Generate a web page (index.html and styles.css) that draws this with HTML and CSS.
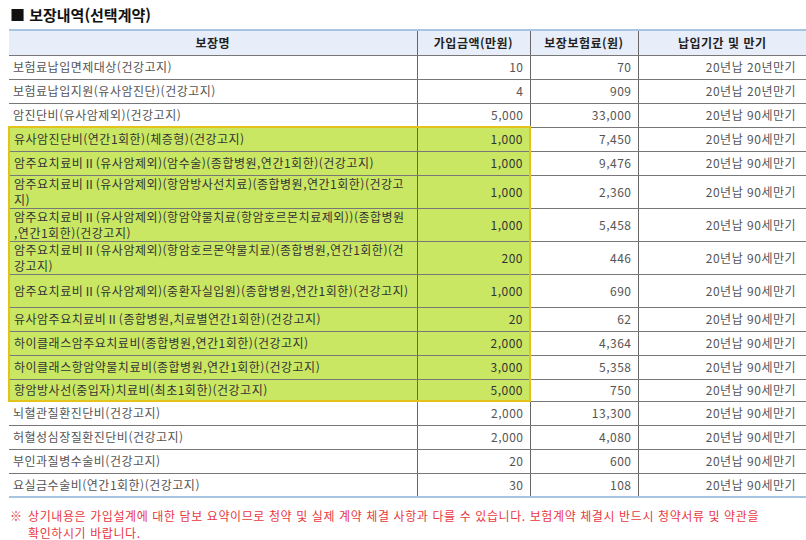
FILE: index.html
```html
<!DOCTYPE html>
<html lang="ko">
<head>
<meta charset="utf-8">
<link rel="stylesheet" href="styles.css">
</head>
<body>
<div class="page">
  <h2 class="title">■ 보장내역(선택계약)</h2>
  <table class="cov">
    <colgroup>
      <col class="c1"><col class="c2"><col class="c3"><col class="c4">
    </colgroup>
    <thead>
      <tr><th>보장명</th><th>가입금액(만원)</th><th>보장보험료(원)</th><th>납입기간 및 만기</th></tr>
    </thead>
    <tbody>
      <tr><td class="name">보험료납입면제대상(건강고지)</td><td>10</td><td>70</td><td>20년납 20년만기</td></tr>
      <tr><td class="name">보험료납입지원(유사암진단)(건강고지)</td><td>4</td><td>909</td><td>20년납 20년만기</td></tr>
      <tr><td class="name">암진단비(유사암제외)(건강고지)</td><td>5,000</td><td>33,000</td><td>20년납 90세만기</td></tr>
      <tr class="hl first"><td class="name">유사암진단비(연간1회한)(체증형)(건강고지)</td><td>1,000</td><td>7,450</td><td>20년납 90세만기</td></tr>
      <tr class="hl"><td class="name">암주요치료비Ⅱ(유사암제외)(암수술)(종합병원,연간1회한)(건강고지)</td><td>1,000</td><td>9,476</td><td>20년납 90세만기</td></tr>
      <tr class="hl dbl"><td class="name">암주요치료비Ⅱ(유사암제외)(항암방사선치료)(종합병원,연간1회한)(건강고지)</td><td>1,000</td><td>2,360</td><td>20년납 90세만기</td></tr>
      <tr class="hl dbl"><td class="name">암주요치료비Ⅱ(유사암제외)(항암약물치료(항암호르몬치료제외))(종합병원<br>,연간1회한)(건강고지)</td><td>1,000</td><td>5,458</td><td>20년납 90세만기</td></tr>
      <tr class="hl dbl"><td class="name">암주요치료비Ⅱ(유사암제외)(항암호르몬약물치료)(종합병원,연간1회한)(건강고지)</td><td>200</td><td>446</td><td>20년납 90세만기</td></tr>
      <tr class="hl tall"><td class="name">암주요치료비Ⅱ(유사암제외)(중환자실입원)(종합병원,연간1회한)(건강고지)</td><td>1,000</td><td>690</td><td>20년납 90세만기</td></tr>
      <tr class="hl"><td class="name">유사암주요치료비Ⅱ(종합병원,치료별연간1회한)(건강고지)</td><td>20</td><td>62</td><td>20년납 90세만기</td></tr>
      <tr class="hl"><td class="name">하이클래스암주요치료비(종합병원,연간1회한)(건강고지)</td><td>2,000</td><td>4,364</td><td>20년납 90세만기</td></tr>
      <tr class="hl"><td class="name">하이클래스항암약물치료비(종합병원,연간1회한)(건강고지)</td><td>3,000</td><td>5,358</td><td>20년납 90세만기</td></tr>
      <tr class="hl last"><td class="name">항암방사선(중입자)치료비(최초1회한)(건강고지)</td><td>5,000</td><td>750</td><td>20년납 90세만기</td></tr>
      <tr><td class="name">뇌혈관질환진단비(건강고지)</td><td>2,000</td><td>13,300</td><td>20년납 90세만기</td></tr>
      <tr><td class="name">허혈성심장질환진단비(건강고지)</td><td>2,000</td><td>4,080</td><td>20년납 90세만기</td></tr>
      <tr><td class="name">부인과질병수술비(건강고지)</td><td>20</td><td>600</td><td>20년납 90세만기</td></tr>
      <tr><td class="name">요실금수술비(연간1회한)(건강고지)</td><td>30</td><td>108</td><td>20년납 90세만기</td></tr>
    </tbody>
  </table>
  <p class="note"><span class="mark">※</span><span class="note-text">상기내용은 가입설계에 대한 담보 요약이므로 청약 및 실제 계약 체결 사항과 다를 수 있습니다. 보험계약 체결시 반드시 청약서류 및 약관을 확인하시기 바랍니다.</span></p>
</div>
</body>
</html>
```
FILE: styles.css
```css
* { box-sizing: border-box; }
html, body { margin: 0; padding: 0; background: #fff; }
body {
  font-family: "Noto Sans CJK KR", "Noto Sans", sans-serif;
  font-size: 12px;
  color: #555;
}
.page { padding: 0 1px 0 8px; width: 806px; }
.title {
  margin: 0;
  height: 29px;
  padding-top: 4px;
  font-size: 15px;
  line-height: 22px;
  font-weight: 700;
  color: #111;
  padding-left: 2px;
}
.cov {
  width: 797px;
  border-collapse: collapse;
  table-layout: fixed;
  border-top: 2px solid #a9c3e3;
  border-bottom: 2px solid #a9c3e3;
  letter-spacing: 0.5px;
}
.c1 { width: 408px; }
.c2 { width: 113px; }
.c3 { width: 108px; }
.c4 { width: 168px; }
.cov th {
  height: 25px;
  background: #e7eef9;
  font-weight: 700;
  color: #222;
  font-size: 12px;
  line-height: 16px;
  padding: 0;
  text-align: center;
  border-left: 1px solid #666;
  border-bottom: 1px solid #777;
}
.cov th:first-child { border-left: none; }
.cov td {
  height: 24px;
  padding: 0 6px 0 4px;
  line-height: 16px;
  text-align: right;
  vertical-align: middle;
  border-left: 1px solid #666;
  border-bottom: 1px solid #777;
}
.cov td:first-child { border-left: none; }
.cov td:last-child { padding-right: 10px; }
.cov td.name { text-align: left; padding-right: 2px; }
.cov tr.dbl td { height: 32px; }
.cov tr.tall td { height: 33px; }
.cov tr.hl td:nth-child(-n+2) {
  background: #c9e763;
  color: #333;
}
.cov tr.hl td:first-child { border-left: 2px solid #e3c21c; }
.cov tr.hl td:nth-child(2) { border-right: 2px solid #e3c21c; }
.cov tr.hl.first td:nth-child(-n+2) { border-top: 2px solid #e3c21c; }
.cov tr.hl.last td:nth-child(-n+2) { border-bottom: 2px solid #e3c21c; }
.cov tr.last td { height: 22px; }
.cov tbody tr:last-child td { border-bottom: none; }
.note {
  display: flex;
  margin: 9px 0 0 0;
  color: #e8383f;
  font-size: 12px;
  line-height: 17px;
  letter-spacing: 0.6px;
  word-break: keep-all;
}
.mark { width: 20px; flex: none; padding-left: 2px; }
.note-text { flex: 1; }
```
